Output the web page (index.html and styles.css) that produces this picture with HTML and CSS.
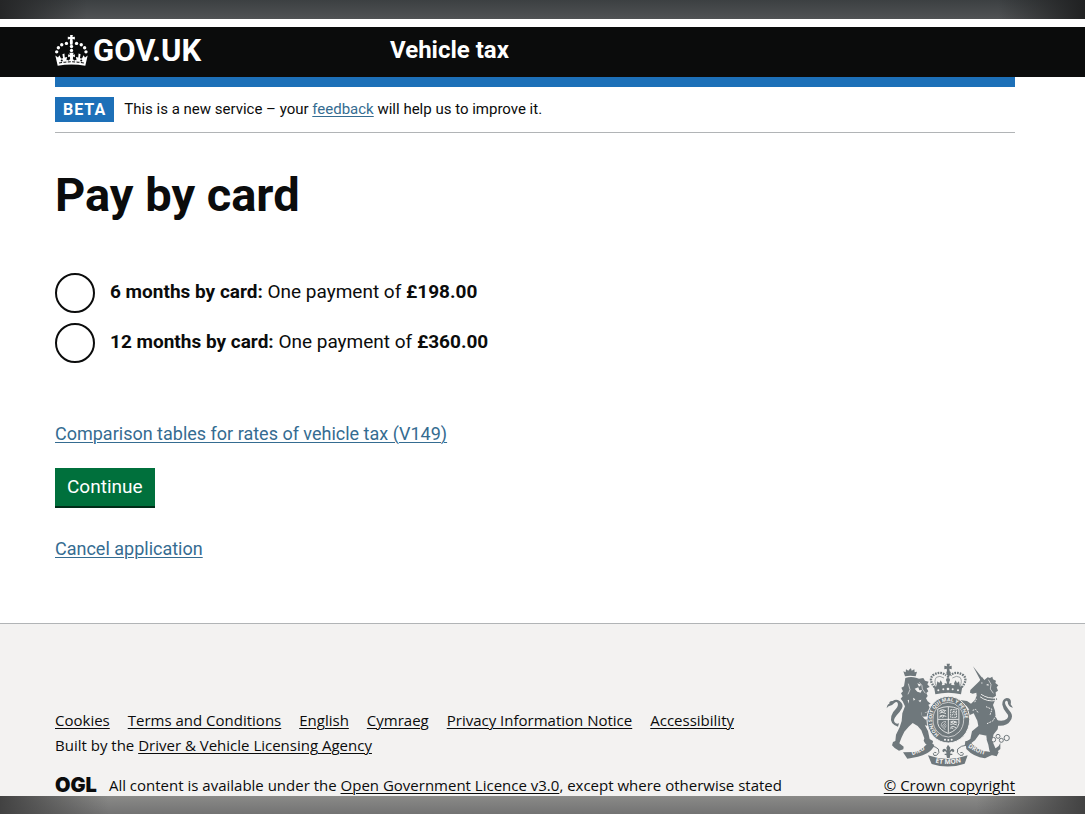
FILE: index.html
```html
<!DOCTYPE html>
<html lang="en">
<head>
    <meta charset="UTF-8">
    <meta name="viewport" content="width=device-width, initial-scale=1.0">
    <title>Pay by card - Vehicle tax - GOV.UK</title>
    <link rel="stylesheet" href="styles.css">
</head>
<body>
    <div class="strip-top"></div>

    <header class="header">
        <div class="container header-inner">
            <a class="logo" href="#home">
                <svg class="crown" viewBox="164 107 98 92" aria-hidden="true">
                    <g fill="#fff">
                        <path d="M209 107h8l-1 6 7-1v8l-7-1 1 9-1 8h-7l-1-8 1-9-7 1v-8l7 1z"/>
                        <circle cx="213" cy="141" r="5"/>
                        <circle cx="213" cy="153" r="5"/>
                        <circle cx="198" cy="132" r="5"/>
                        <circle cx="228" cy="132" r="5"/>
                        <circle cx="184" cy="136" r="5"/>
                        <circle cx="242" cy="136" r="5"/>
                        <circle cx="174" cy="145" r="5"/>
                        <circle cx="252" cy="145" r="5"/>
                        <circle cx="169" cy="157" r="5"/>
                        <circle cx="256" cy="157" r="5"/>
                        <path d="M165 168l8 6 4-7 5 10 6-1-2-12 6-2 1 12 7-2-2 10 11-3-1-8-5 2v-9l5 2-1-6h12l-1 6 5-2v9l-5-2-1 8 11 3-2-10 7 2 1-12 6 2-2 12 6 1 5-10 4 7 8-6-7 30q-41-7-82 0z"/>
                    </g>
                    <path d="M176 190q37-7 74 0" fill="none" stroke="#0b0c0c" stroke-width="3" stroke-dasharray="9 4"/>
                    <g fill="#0b0c0c">
                        <circle cx="184" cy="183" r="3"/>
                        <circle cx="204" cy="180" r="3"/>
                        <circle cx="222" cy="180" r="3"/>
                        <circle cx="242" cy="183" r="3"/>
                    </g>
                </svg>
                <span>GOV.UK</span>
            </a>
            <a class="service-name" href="#service">Vehicle tax</a>
        </div>
    </header>

    <div class="page">
        <div class="container">
            <div class="blue-bar"></div>
            <div class="phase-banner">
                <strong class="tag">BETA</strong>
                <span>This is a new service – your <a href="#feedback">feedback</a> will help us to improve it.</span>
            </div>

            <main>
                <h1>Pay by card</h1>
                <form action="#">
                    <div class="radios">
                        <div class="radio">
                            <input type="radio" id="six-months" name="payment" value="6">
                            <label for="six-months"><b>6 months by card:</b> One payment of <b>£198.00</b></label>
                        </div>
                        <div class="radio">
                            <input type="radio" id="twelve-months" name="payment" value="12">
                            <label for="twelve-months"><b>12 months by card:</b> One payment of <b>£360.00</b></label>
                        </div>
                    </div>
                    <p><a href="#rates">Comparison tables for rates of vehicle tax (V149)</a></p>
                    <button type="submit" class="button">Continue</button>
                    <p><a href="#cancel">Cancel application</a></p>
                </form>
            </main>
        </div>
    </div>

    <footer class="footer">
        <div class="container footer-inner">
            <div class="footer-meta">
                <ul class="footer-links">
                    <li><a href="#cookies">Cookies</a></li>
                    <li><a href="#terms">Terms and Conditions</a></li>
                    <li><a href="#english">English</a></li>
                    <li><a href="#cymraeg">Cymraeg</a></li>
                    <li><a href="#privacy">Privacy Information Notice</a></li>
                    <li><a href="#accessibility">Accessibility</a></li>
                </ul>
                <p class="built-by">Built by the <a href="#dvla">Driver &amp; Vehicle Licensing Agency</a></p>
                <div class="licence">
                    <span class="ogl">OGL</span>
                    <span>All content is available under the <a href="#ogl">Open Government Licence v3.0</a>, except where otherwise stated</span>
                </div>
            </div>
            <a class="copyright" href="#copyright">
                <!-- Royal coat of arms -->
                <svg class="crest" viewBox="48 38 381 315" aria-hidden="true">
                    <defs>
                        <path id="garter" d="M207 253A49 55 0 1 1 263 253"/>
                        <path id="dieu" d="M119 317Q151 309 178 288"/>
                        <path id="motto" d="M190 336Q234 347 281 334"/>
                        <path id="droit" d="M290 288Q320 309 355 316"/>
                    </defs>
                    <g fill="#6f787c">
                        <!-- lion -->
                        <path d="M105 78l-5-15 7 3 1-9 7 4 5-6 3-1 2 7 8-4 1 9 7-2-4 14q-16-4-32 0z"/>
                        <path d="M106 83q16-6 32-1l9 3 13-2 5 8 11 3-4 8 7 8-9 4 5 9-6 5 4 9-5 7 5 9 9 7-7 3 5 10-3 9-10 4-14-2 3 13 11 13-1 17 8 15 5 24 10 6-1 7-9 4-13-3-5-9 2-7-9-24-11-13-15-9-12 11-13 15-8 17-7 18 13 10-1 8-13 4-13-8-8-8 3-10 7-3 2-19 11-22 6-19 2-23 8-21-7-15-6-8 6-7-5-9 6-6-5-11 8-4z"/>
                        <path d="M151 176l16 11 18-7 6 10-12 8-22 1zM162 208l17-2 8 8-3 10-14 2-14-8z"/>
                        <path d="M84 229q-26-8-20-32 2-11 14-22 8-9 5-17-3-6-10 0-7 8-13 8-6 1-10 8 1-12 8-14-1-9 10-8 10-8 21 0 13 10 7 22-6 11-16 21-12 15-6 21 4 6 13 3z"/>
                        <!-- unicorn -->
                        <path d="M309 48l32 40-8 5z"/>
                        <path d="M328 93l8-13 7 9 10-8 7 2 7-4 2 8 9 4-2 7 9 7-5 6 4 10-7 5 1 10-8 6 4 11-5 11 6 17 2 18 9 17-3 21-12 15-5 18 10 23 10 13-6 12-16-4-6-14-3-17-5-15 0-12-22-4-13 18-16 12-15 3 2-10 15-9 5-23 19-16-3-16-11-22-13 6-14-2-12-8 3-9 13 4 10-2-8-11-17-8-12 3-4-8 13-5 21 3 12 8 11-10 6-14-1-9-11 3-8-3 1-8z"/>
                        <path d="M377 208q22 7 34-3 8-9-2-18-10-12-12-24-1-17 13-20 16 0 12 19l7 10q-11-2-15-12 0-10-6-9-6 5 0 15 5 8 14 20 9 13-2 27-10 16-38 13z"/>
                        <!-- crown over the shield -->
                        <path d="M230 40h10l-2 8 7-2v11l-7-2 1 8q6 3 1 11l-4 7q-6-8-7-12 0-4 2-7l-1-7-7 2V46l8 2z"/>
                        <path d="M192 109q43-12 85 0l-4 23q-39-9-77 0z"/>
                        <circle cx="234" cy="89" r="6"/>
                        <path d="M230 94h8l-1 6 7-2v10h-20V98l7 2zM202 93l6 5 4-8 5 9-3 10-15 1zM267 93l-6 5-4-8-5 9 3 10 15 1z"/>
                    </g>
                    <g fill="none" stroke="#6f787c">
                        <path d="M194 111q-20-24-4-37 21-13 38 1M275 111q20-24 4-37-21-13-38 1M234 77v18" stroke-width="7" stroke-dasharray="5 3"/>
                        <path d="M199 108q-8-17 0-27 10-7 23 2M270 108q8-17 0-27-10-7-23 2" stroke-width="2"/>
                    </g>
                    <g fill="#f3f2f1">
                        <path d="M142 99l12 4-7 6zM134 115l11-4 3 9 8-1-4 8-10-3zM129 142l7 5-5 4zM145 151l9-3-3 8zM113 150l4-2-1 12zM348 104l7-4 1 6zM332 98l5-2v4z"/>
                        <circle cx="205" cy="120" r="3"/>
                        <circle cx="220" cy="117" r="3"/>
                        <circle cx="234" cy="116" r="4"/>
                        <circle cx="248" cy="117" r="3"/>
                        <circle cx="264" cy="120" r="3"/>
                    </g>
                    <path d="M355 88l8 14-2 14 9 13M148 96q11 9 9 20l9 13M115 100l5 18-6 14" fill="none" stroke="#f3f2f1" stroke-width="2"/>
                    <path d="M330 139q22 17 49 11M333 132q22 15 48 10" fill="none" stroke="#f3f2f1" stroke-width="3"/>
                    <path d="M332 135q22 17 49 11" fill="none" stroke="#6f787c" stroke-width="5" stroke-dasharray="4 3"/>
                    <!-- garter and shield -->
                    <ellipse cx="235" cy="208" rx="64" ry="70" fill="#6f787c" stroke="#f3f2f1" stroke-width="3"/>
                    <ellipse cx="235" cy="208" rx="46" ry="52" fill="none" stroke="#f3f2f1" stroke-width="2"/>
                    <g transform="translate(235 208) scale(.88) translate(-235 -208)" fill="none" stroke="#f3f2f1" stroke-width="3">
                        <path d="M199 172q35-17 72 0v49q-5 23-36 34-31-11-36-34z"/>
                        <path d="M235 165v88M200 207h70"/>
                        <path d="M205 177l11-3 12 4M205 186l9-3 13 4M205 196l11-3 12 4M205 181l4-4 5 4 4-4 5 5M205 200l6-4 5 4 5-4"/>
                        <path d="M243 174h20v26h-20zM248 194l4-8-3-5 8-2 2 7-3 9" stroke-dasharray="6 2"/>
                        <path d="M227 214q-18 1-16 15l14 14M226 217l-12 13M227 222l-9 12M228 228l-6 10" stroke-width="2"/>
                        <path d="M242 216l10-3 13 4M242 225l9-3 13 4M242 234l9-3 10 4M243 220l5-4 5 4 5-4 5 4M242 239l5-3 5 3"/>
                    </g>
                    <g class="crest-motto" fill="#f3f2f1">
                        <text font-size="15"><textPath href="#garter">HONI SOIT QUI MAL Y PENSE</textPath></text>
                    </g>
                    <g fill="#f3f2f1">
                        <circle cx="225" cy="268" r="3"/>
                        <circle cx="235" cy="269" r="3"/>
                        <circle cx="245" cy="268" r="3"/>
                    </g>
                    <!-- lily, chain and ribbon -->
                    <g fill="#6f787c">
                        <path d="M234 283l7 9-2 9q7-9 13-3 3 6-5 8 1-8-6 0v4h6v4h-6l-2 9h-8l-2-9h-5v-4h5v-4q-7-8-6 0-8-2-5-8 6-6 13 3l-2-9z"/>
                        <path d="M99 306l34-1q28-6 43-33l17 12q-7 17-22 25-25 13-59 16z"/>
                        <path d="M286 272h12q23 30 64 33l24-18 5-9v18l-18 15-28 13q-34-4-56-28z"/>
                        <path d="M174 315q60 22 119 0l-9 25q-49 17-99 1z"/>
                    </g>
                    <g fill="none" stroke="#6f787c" stroke-width="3">
                        <path d="M183 288q13-1 22 8 6 11-5 19-11 3-10-5 2-6 9-3M288 285q-14 0-25 11-5 12 7 19 11 2 10-5-2-6-9-3"/>
                        <circle cx="356" cy="259" r="5"/>
                        <circle cx="370" cy="268" r="7"/>
                        <circle cx="384" cy="258" r="6"/>
                        <circle cx="394" cy="270" r="6"/>
                        <circle cx="410" cy="263" r="8"/>
                    </g>
                    <path d="M310 141l9 5-5 10M348 169l18 8-6 17M351 220l17-8 9-14M308 180l9-3 8 11" fill="none" stroke="#f3f2f1" stroke-width="3" stroke-dasharray="5 3"/>
                    <g class="crest-motto" fill="#f3f2f1">
                        <text font-size="18"><textPath href="#dieu" startOffset="8">DIEU</textPath></text>
                        <text font-size="20"><textPath href="#motto" startOffset="6">ET MON</textPath></text>
                        <text font-size="18"><textPath href="#droit" startOffset="4">DROIT</textPath></text>
                    </g>
                </svg>
                <span>© Crown copyright</span>
            </a>
        </div>
    </footer>

    <div class="strip-bottom"></div>
</body>
</html>
```
FILE: styles.css
```css
* {
    margin: 0;
    padding: 0;
    box-sizing: border-box;
}

body {
    font-family: Roboto, Arial, sans-serif;
    font-size: 18px;
    line-height: 25px;
    color: #0b0c0c;
    background-color: #fff;
}

/* Shaded strips above and below the page */
.strip-top {
    height: 19px;
    margin-bottom: 8px;
    background: linear-gradient(90deg, #252627, transparent 8%, transparent 92%, #202122), linear-gradient(#3c4042, #505254);
}

.strip-bottom {
    height: 18px;
    background: linear-gradient(90deg, #424242, transparent 10%, transparent 90%, #424242), linear-gradient(#8a8a88, #737373);
}

.header,
.page,
.footer {
    padding-right: 15px;
}

.container {
    max-width: 960px;
    margin: 0 auto;
}

/* Header */
.header {
    background-color: #0b0c0c;
}

.header-inner {
    display: grid;
    grid-template-columns: 335px 1fr;
    align-items: center;
    height: 50px;
    padding-bottom: 4px;
}

.header a {
    color: #fff;
    text-decoration: none;
    font-weight: 700;
}

.logo {
    display: flex;
    align-items: center;
    gap: 5px;
    font-size: 31px;
}

.crown {
    width: 33px;
    height: 31px;
}

.service-name {
    font-size: 24px;
}

.blue-bar {
    height: 10px;
    background-color: #1d70b8;
}

/* Beta banner */
.phase-banner {
    display: flex;
    align-items: center;
    gap: 10px;
    padding: 10px 0;
    border-bottom: 1px solid #b1b4b6;
    font-size: 15px;
}

.tag {
    padding: 0 8px;
    background-color: #1d70b8;
    color: #fff;
    font-size: 16px;
    letter-spacing: 1px;
}

/* Main content */
main {
    padding: 37px 0 62px;
}

main a,
.phase-banner a {
    color: #356c91;
    text-underline-offset: 2px;
    text-decoration-thickness: 1px;
}

h1 {
    font-size: 47px;
    line-height: 50px;
    margin-bottom: 53px;
}

.radios {
    display: grid;
    gap: 10px;
    margin-bottom: 58px;
}

.radio {
    display: flex;
    align-items: center;
    gap: 15px;
    font-size: 19px;
}

.radio input {
    appearance: none;
    width: 40px;
    height: 40px;
    border: 2px solid #0b0c0c;
    border-radius: 50%;
    background-color: #fff;
}

.radio input:checked {
    box-shadow: inset 0 0 0 8px #fff;
    background-color: #0b0c0c;
}

.radio label {
    padding-bottom: 4px;
}

.button {
    display: block;
    margin: 22px 0 28px;
    padding: 6px 12px 7px;
    border: 0;
    border-bottom: 2px solid #002d18;
    background-color: #00703c;
    color: #fff;
    font: inherit;
    font-size: 19px;
    cursor: pointer;
}

/* Footer */
.footer {
    padding-top: 39px;
    border-top: 1px solid #b1b4b6;
    background-color: #f3f2f1;
    font-family: "Open Sans", Arial, sans-serif;
    font-size: 15px;
}

.footer a {
    color: #0b0c0c;
    text-underline-offset: 2px;
    text-decoration-thickness: 1px;
}

.footer-inner {
    display: flex;
    justify-content: space-between;
    align-items: flex-end;
}

.footer-links {
    display: flex;
    flex-wrap: wrap;
    gap: 0 18px;
    list-style: none;
}

.built-by {
    margin-bottom: 16px;
}

.licence {
    display: flex;
    align-items: center;
    gap: 12px;
    line-height: 22px;
}

.ogl {
    font-family: Inter, sans-serif;
    font-size: 20px;
    font-weight: 900;
}

.copyright {
    display: flex;
    flex-direction: column;
    align-items: center;
    gap: 6px;
    line-height: 22px;
}

.crest {
    width: 127px;
    height: 105px;
}

.crest-motto {
    font-family: "Open Sans", sans-serif;
    font-weight: 700;
}
```
